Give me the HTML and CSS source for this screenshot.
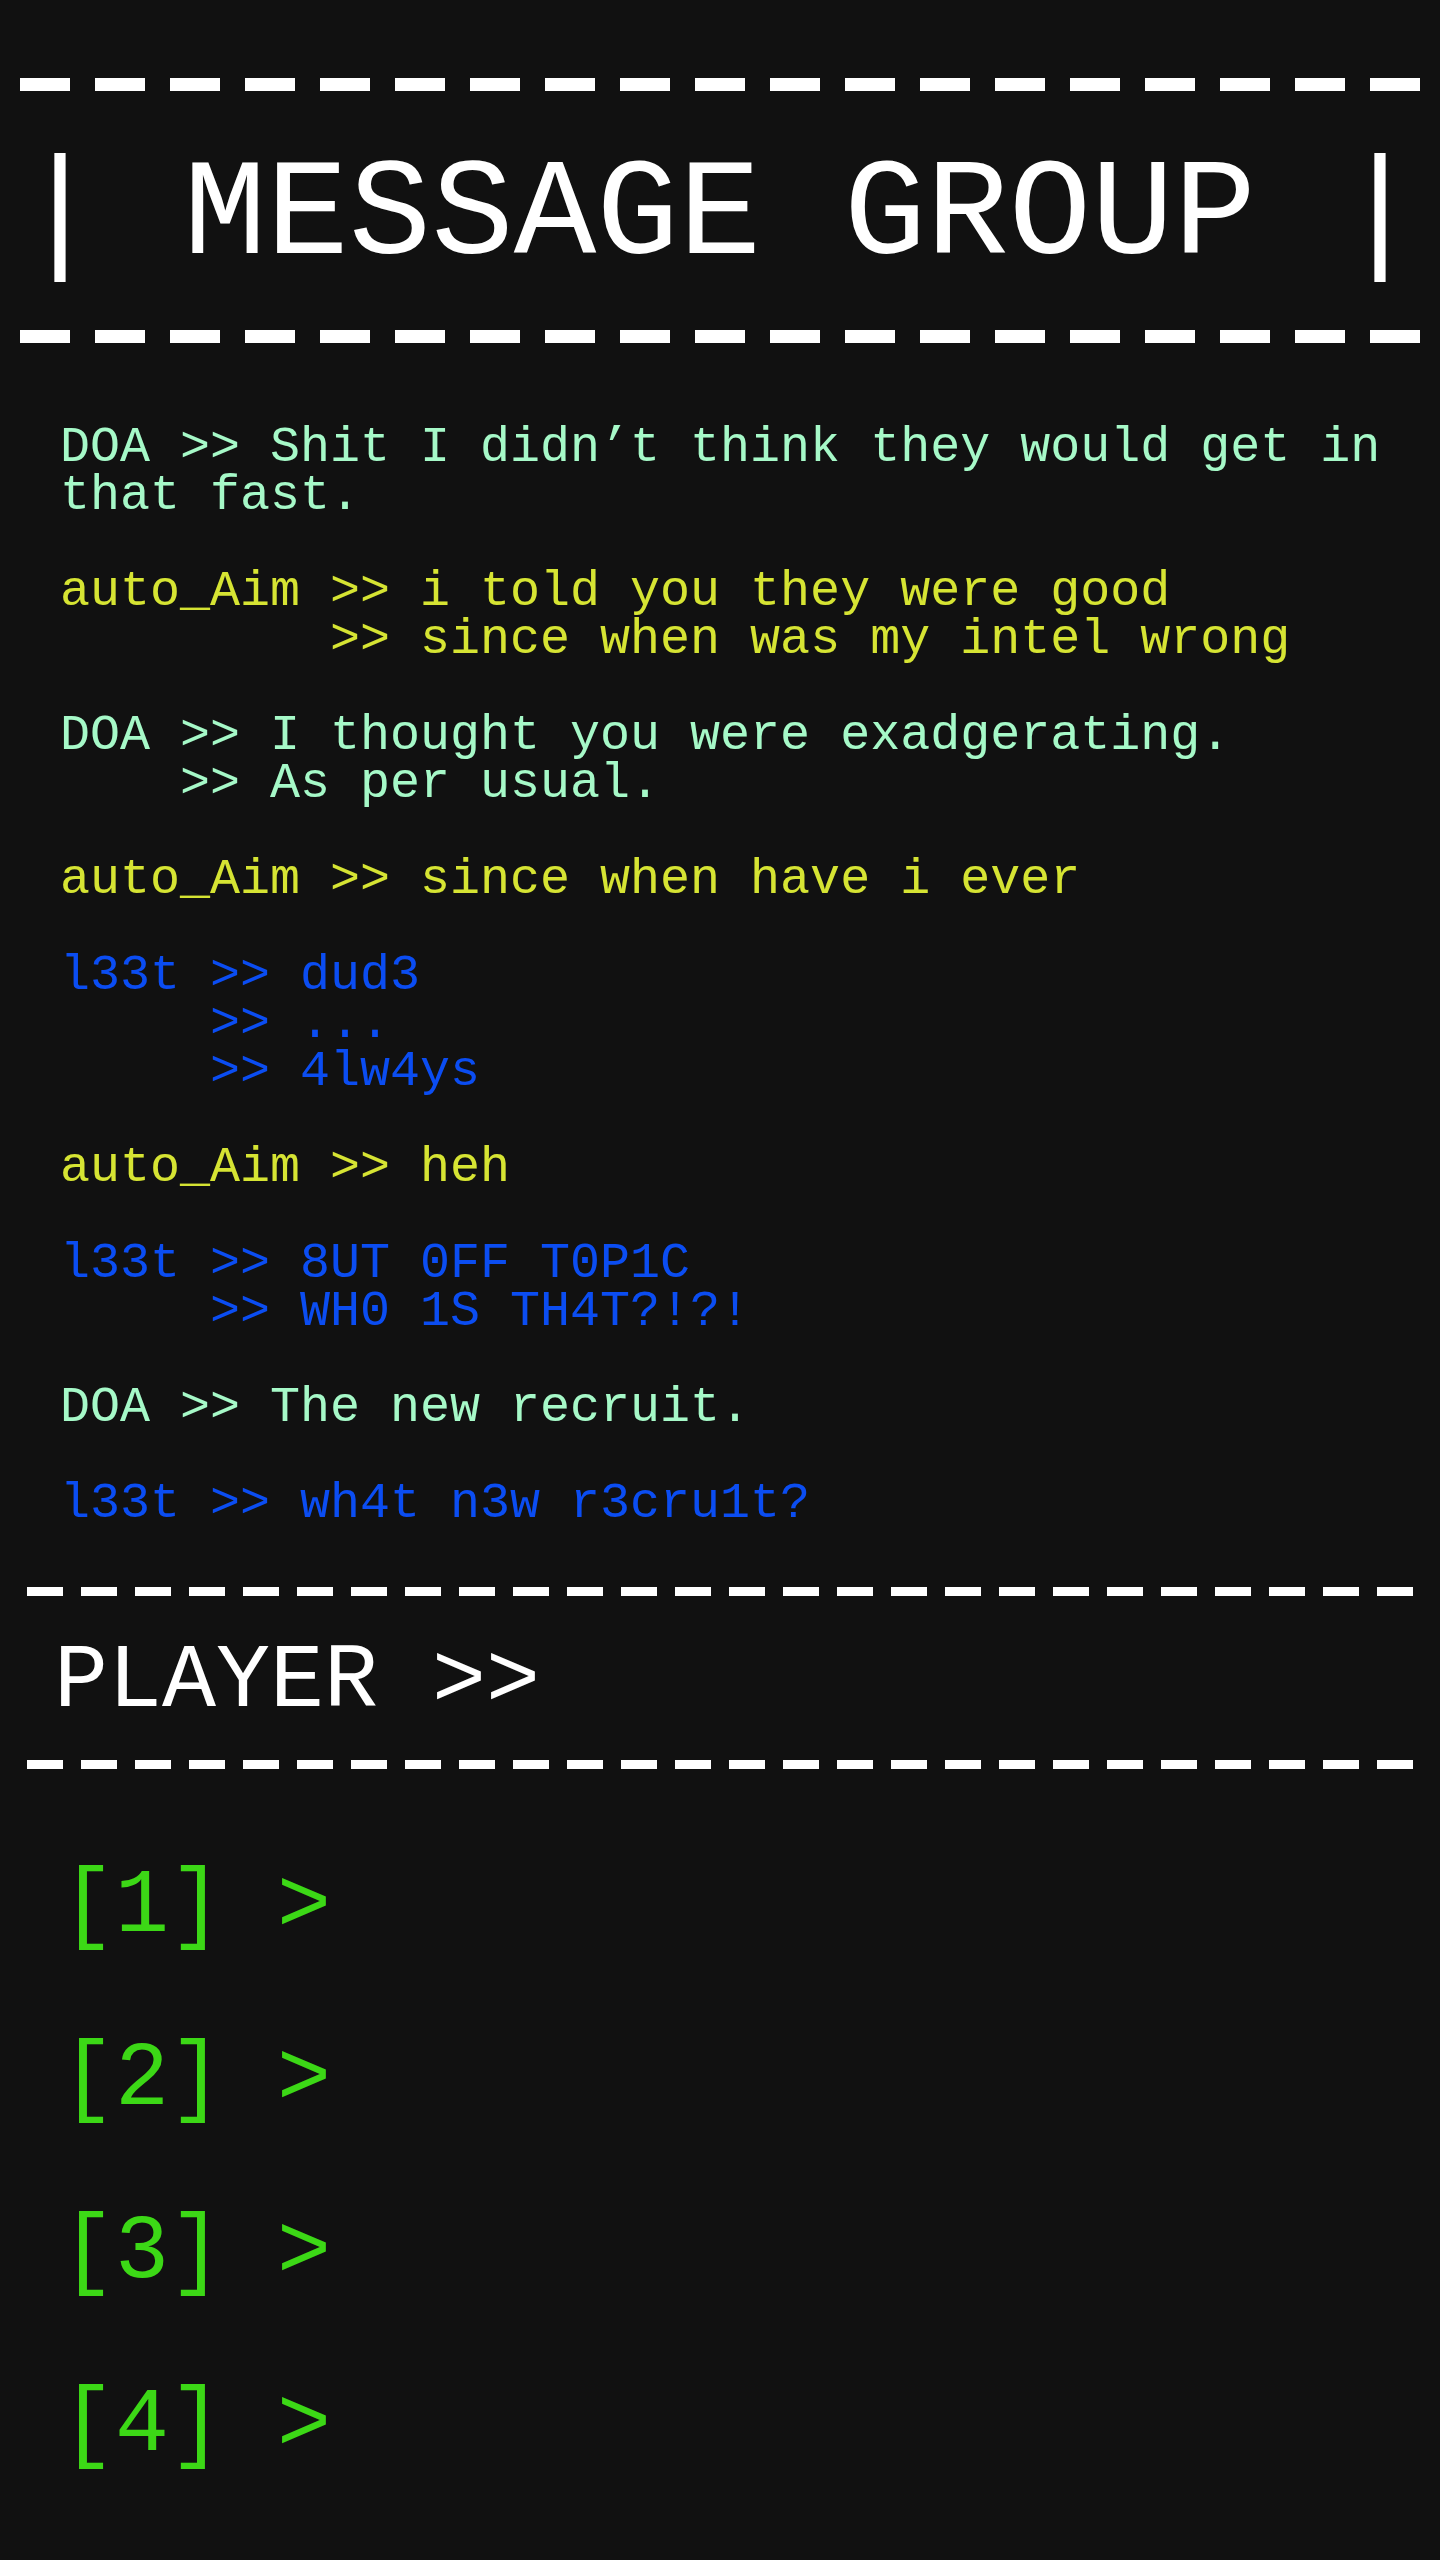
FILE: index.html
```
<!DOCTYPE html>
<html lang="en">
<head>
<meta charset="utf-8">
<title>Message Group</title>
<link rel="stylesheet" href="styles.css">
</head>
<body>
<main class="screen">
  <header class="banner">
    <hr class="rule rule-lg rule-lg-top">
    <h1 class="title">| MESSAGE GROUP |</h1>
    <hr class="rule rule-lg rule-lg-bottom">
  </header>
  <section class="log">
<p class="msg doa">DOA &gt;&gt; Shit I didn’t think they would get in that fast.</p>
<p class="msg aim">auto_Aim &gt;&gt; i told you they were good
         &gt;&gt; since when was my intel wrong</p>
<p class="msg doa">DOA &gt;&gt; I thought you were exadgerating.
    &gt;&gt; As per usual.</p>
<p class="msg aim">auto_Aim &gt;&gt; since when have i ever</p>
<p class="msg leet">l33t &gt;&gt; dud3
     &gt;&gt; ...
     &gt;&gt; 4lw4ys</p>
<p class="msg aim">auto_Aim &gt;&gt; heh</p>
<p class="msg leet">l33t &gt;&gt; 8UT 0FF T0P1C
     &gt;&gt; WH0 1S TH4T?!?!</p>
<p class="msg doa">DOA &gt;&gt; The new recruit.</p>
<p class="msg leet">l33t &gt;&gt; wh4t n3w r3cru1t?</p>
  </section>
  <hr class="rule rule-sm rule-sm-top">
  <div class="player">PLAYER &gt;&gt;</div>
  <hr class="rule rule-sm rule-sm-bottom">
  <ol class="options">
    <li class="option">[1] &gt;</li>
    <li class="option">[2] &gt;</li>
    <li class="option">[3] &gt;</li>
    <li class="option">[4] &gt;</li>
  </ol>
</main>
</body>
</html>
```
FILE: styles.css
```
html, body {
  margin: 0;
  padding: 0;
  background: #111111;
}

body {
  font-family: "Liberation Mono", "DejaVu Sans Mono", monospace;
  color: #ffffff;
  min-height: 2560px;
}

.screen {
  display: block;
  padding-top: 1px;
}

/* dashed separators */
.rule {
  display: block;
  border: 0;
  padding: 0;
  margin-left: auto;
  margin-right: auto;
}

.rule-lg {
  width: 1400px;
  height: 13px;
  background: repeating-linear-gradient(90deg, #ffffff 0 50px, transparent 50px 75px);
}

.rule-lg-top {
  margin-top: 77px;
  margin-bottom: 0;
}

.rule-lg-bottom {
  margin-top: 35px;
  margin-bottom: 0;
}

.title {
  margin: 48px 0 0;
  font-size: 137.5px;
  font-weight: normal;
  line-height: 156px;
  text-align: center;
  white-space: pre;
}

.log {
  margin: 81px 0 0;
  padding: 0 40px 0 60px;
}

.msg {
  margin: 0 0 48px;
  font-size: 50px;
  line-height: 48px;
  white-space: pre-wrap;
}

.msg:last-child {
  margin-bottom: 0;
}

.doa {
  color: #a6f9c8;
}

.aim {
  color: #d6e433;
}

.leet {
  color: #0b4df2;
}

.rule-sm {
  width: 1386px;
  height: 9px;
  background: repeating-linear-gradient(90deg, #ffffff 0 36px, transparent 36px 54px);
}

.rule-sm-top {
  margin-top: 59px;
  margin-bottom: 0;
}

.player {
  margin-top: 35px;
  font-size: 90px;
  line-height: 102px;
  padding-left: 54px;
  white-space: pre;
}

.rule-sm-bottom {
  margin-top: 27px;
  margin-bottom: 0;
}

.options {
  list-style: none;
  margin: 52px 0 0;
  padding: 0 0 0 61px;
  font-size: 90px;
  line-height: 173px;
  color: #3cd816;
}

.option {
  white-space: pre;
}
```
